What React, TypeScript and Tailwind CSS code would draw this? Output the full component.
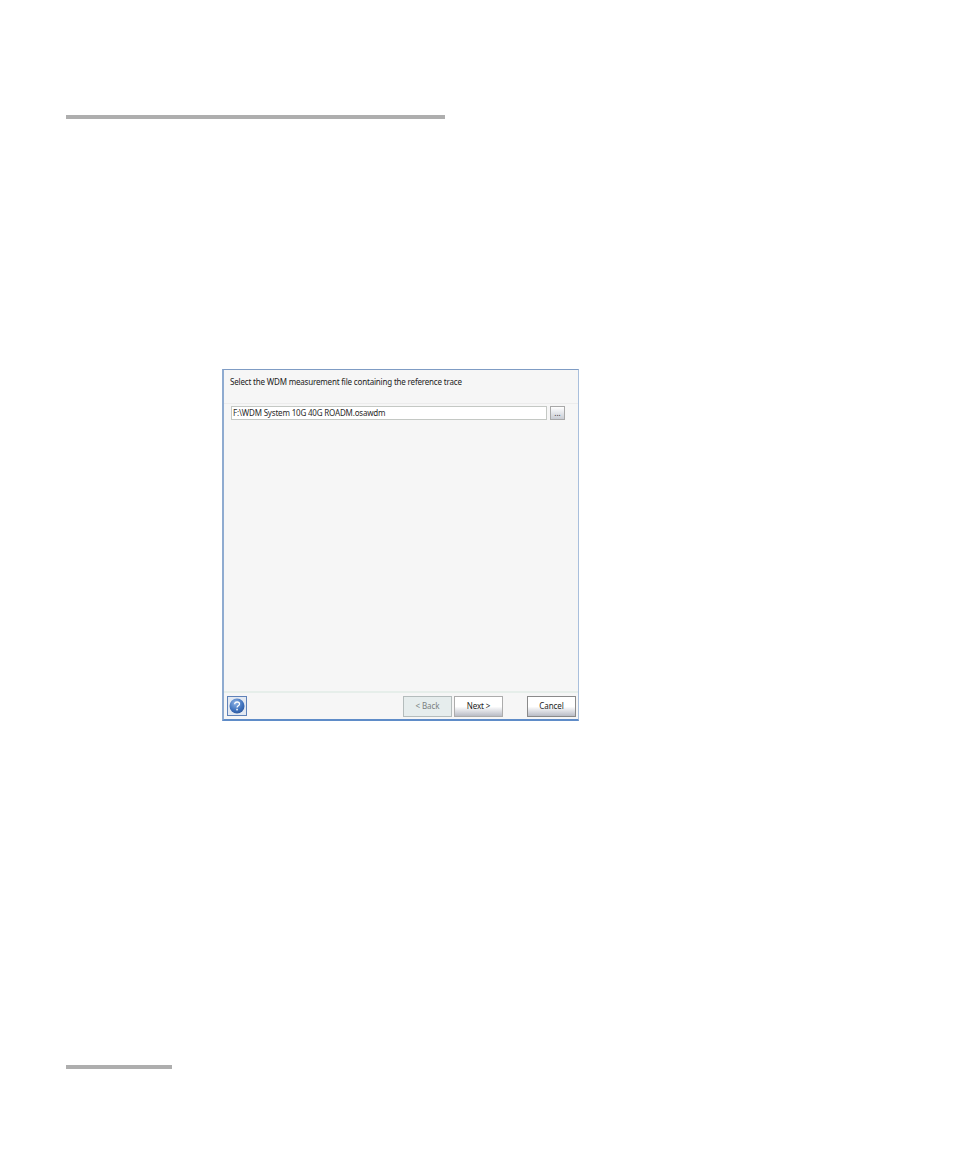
import React from 'react';

function HelpIcon() {
    return (
        <svg width="16" height="16" viewBox="0 0 16 16">
            <defs>
                <radialGradient id="helpBall" cx="0.4" cy="0.3" r="0.8">
                    <stop offset="0" stopColor="#8fb4e6" />
                    <stop offset="0.6" stopColor="#3f72bd" />
                    <stop offset="1" stopColor="#2a5498" />
                </radialGradient>
            </defs>
            <circle cx="8" cy="8" r="7.5" fill="url(#helpBall)" />
            <path d="M5.7 6.2c0-1.4 1-2.2 2.4-2.2s2.4.8 2.4 2c0 1.8-2.4 1.9-2.4 3.6" fill="none" stroke="#fff" strokeWidth="1.3" />
            <rect x="7.3" y="10.8" width="1.5" height="1.6" fill="#fff" />
        </svg>
    );
}

function WizardButton({ label, look, className }: { label: string; look: string; className: string }) {
    return (
        <button className={`h-[21px] border pb-[2px] text-[8px] leading-[15px] tracking-[-0.1px] ${look} ${className}`}>
            {label}
        </button>
    );
}

export default function App() {
    return (
        <div className="min-h-[1158px] bg-white pt-[115px] pl-[66px] font-['Noto_Sans',sans-serif]">
            <div className="h-1 w-[379px] bg-[#aeaeae]" />

            <div className="mt-[250px] ml-[156px] flex h-[352px] w-[357px] flex-col border border-t-[#7f9cc4] border-r-[#a9bfdc] border-b-2 border-b-[#5f8cc8] border-l-2 border-l-[#8fabd0] bg-[#f6f6f6]">
                <div className="h-[33px] pt-[5px] pl-[6px] text-[8px] leading-[14px] tracking-[-0.18px] text-[#222222]">
                    Select the WDM measurement file containing the reference trace
                </div>
                <div className="h-px bg-[#ececec]" />

                <div className="flex flex-1 items-start pt-[2px] pl-[7px]">
                    <div className="h-[14px] w-[316px] border border-[#c4c8c4] bg-white pl-[1px] text-[8px] leading-[12px] tracking-[-0.18px] text-[#2a2a2a]">
                        F:\WDM System 10G 40G ROADM.osawdm
                    </div>
                    <button className="ml-[3px] h-[14px] w-[15px] border border-[#a8a8a8] bg-gradient-to-b from-white to-[#c9ccd4] text-[8px] leading-[10px] text-[#333333]">
                        ...
                    </button>
                </div>

                <div className="h-[2px] bg-[#e6eeea]" />
                <div className="flex h-[26px] items-start pt-[3px] pr-[2px] pl-[3px]">
                    <div className="flex h-[20px] w-[20px] items-center justify-center border border-[#5f82b8] bg-[#e3e9f2]">
                        <HelpIcon />
                    </div>
                    <div className="ml-auto flex">
                        <WizardButton
                            label="< Back"
                            look="border-[#b4bcbc] bg-[#e6eded] text-[#7a8080]"
                            className="w-[49px]"
                        />
                        <WizardButton
                            label="Next >"
                            look="border-[#acacac] bg-gradient-to-b from-white from-50% to-[#b9bcc6] text-[#1c1c1c]"
                            className="ml-[2px] w-[49px]"
                        />
                        <WizardButton
                            label="Cancel"
                            look="border-[#8a8a8a] bg-gradient-to-b from-white from-50% to-[#b9bcc6] text-[#1c1c1c]"
                            className="ml-[24px] w-[49px]"
                        />
                    </div>
                </div>
            </div>

            <div className="mt-[344px] h-1 w-[106px] bg-[#aeaeae]" />
        </div>
    );
}
